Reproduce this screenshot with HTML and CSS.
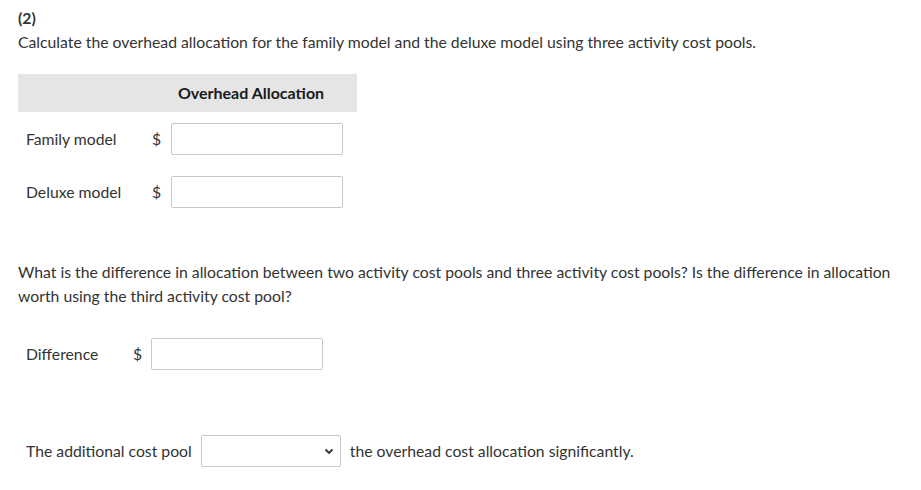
FILE: index.html
```html
<!DOCTYPE html>
<html>
<head>
<meta charset="utf-8">
<link rel="stylesheet" href="styles.css">
</head>
<body>
<div class="page">
  <p class="intro"><span class="num">(2)</span><br>Calculate the overhead allocation for the family model and the deluxe model using three activity cost pools.</p>

  <div class="alloc">
    <div class="head-blank"></div>
    <div class="head">Overhead Allocation</div>

    <div class="label">Family model</div>
    <div class="cur">$</div>
    <div class="field"><input class="box" type="text"></div>

    <div class="label">Deluxe model</div>
    <div class="cur">$</div>
    <div class="field"><input class="box" type="text"></div>
  </div>

  <p class="question">What is the difference in allocation between two activity cost pools and three activity cost pools? Is the difference in allocation worth using the third activity cost pool?</p>

  <div class="diff">
    <span class="label">Difference</span>
    <span class="cur">$</span>
    <input class="box" type="text">
  </div>

  <div class="sentence">
    <span>The additional cost pool</span>
    <span class="select-wrap">
      <select class="choice"><option></option></select>
      <svg class="caret" width="10" height="7" viewBox="0 0 10 7"><path d="M1.5 1.5 L5 5 L8.5 1.5" fill="none" stroke="#333" stroke-width="1.8"/></svg>
    </span>
    <span>the overhead cost allocation significantly.</span>
  </div>
</div>
</body>
</html>
```
FILE: styles.css
```css
* { box-sizing: border-box; }
html, body { margin: 0; padding: 0; background: #fff; }
body {
  font-family: Lato, "Open Sans", sans-serif;
  font-size: 15.75px;
  color: #333;
  line-height: 24px;
}
.page { padding: 6px 18px 0 18px; }
.intro { margin: 0; }
.num { font-weight: bold; }
.alloc {
  margin-top: 20px;
  width: 339px;
  display: grid;
  grid-template-columns: 127px 26px 186px;
  grid-template-rows: 38px 53px 53px;
}
.head-blank { background: #e5e5e5; grid-row: 1; grid-column: 1; }
.head {
  grid-row: 1;
  grid-column: 2 / 4;
  background: #e5e5e5;
  font-weight: bold;
  font-size: 16px;
  color: #1a1a1a;
  display: flex;
  align-items: center;
  justify-content: center;
}
.alloc .label { grid-column: 1; padding-left: 8px; display: flex; align-items: center; }
.alloc .cur { grid-column: 2; display: flex; align-items: center; padding-left: 7px; }
.alloc .field { grid-column: 3; display: flex; align-items: center; }
.alloc > :nth-child(3), .alloc > :nth-child(4), .alloc > :nth-child(5) { grid-row: 2; }
.alloc > :nth-child(6), .alloc > :nth-child(7), .alloc > :nth-child(8) { grid-row: 3; }
.box {
  width: 172px;
  height: 32px;
  border: 1px solid #c8c8c8;
  border-radius: 2px;
  background: #fff;
  margin: 0;
  padding: 0 6px;
  font: inherit;
}
.question { margin: 42px 0 0 0; }
.diff {
  margin-top: 30px;
  display: flex;
  align-items: center;
  padding-left: 8px;
  height: 32px;
}
.diff .label { width: 107px; }
.diff .cur { width: 18px; }
.sentence {
  margin-top: 65px;
  display: flex;
  align-items: center;
  padding-left: 8px;
  height: 32px;
}
.select-wrap {
  position: relative;
  display: inline-block;
  margin: 0 9px 0 9px;
  width: 140px;
  height: 32px;
}
.choice {
  -webkit-appearance: none;
  appearance: none;
  width: 140px;
  height: 32px;
  border: 1px solid #c8c8c8;
  border-radius: 2px;
  background: #fff;
  font: inherit;
  margin: 0;
}
.caret { position: absolute; right: 7px; top: 13px; pointer-events: none; }
```
